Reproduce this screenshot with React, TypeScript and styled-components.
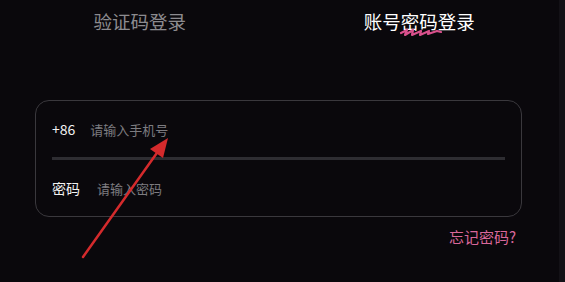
import React from 'react'
import styled, { createGlobalStyle } from 'styled-components'

const GlobalStyle = createGlobalStyle`
  html, body {
    margin: 0;
    padding: 0;
    background: #0a080c;
  }
  body {
    font-family: "Noto Sans CJK SC", "Noto Sans", sans-serif;
  }
`

const Screen = styled.div`
  position: relative;
  display: flex;
  width: 565px;
  height: 282px;
  overflow: hidden;
  background: #0a080c;
`

const Main = styled.div`
  flex: 1;
  display: flex;
  flex-direction: column;
`

const EdgeStrip = styled.div`
  width: 6px;
  background: #131116;
`

const Tabs = styled.div`
  display: flex;
  height: 41px;
  align-items: center;
`

const Tab = styled.div<{ active?: boolean }>`
  flex: 1;
  display: flex;
  justify-content: center;
  font-size: 18.5px;
  line-height: 24px;
  color: ${({ active }) => (active ? '#ffffff' : '#8c8b8f')};
`

const Marked = styled.span`
  position: relative;
  display: inline-block;

  svg {
    position: absolute;
    left: -2px;
    bottom: -5px;
  }
`

const Card = styled.div`
  margin: 59px 37px 0 35px;
  border: 1px solid #3a383d;
  border-radius: 14px;
  padding: 0 16px;
`

const Row = styled.div<{ gap: number }>`
  display: flex;
  align-items: center;
  height: 56px;
  gap: ${({ gap }) => gap}px;
`

const Label = styled.span`
  font-size: 14px;
  color: #f2f2f2;
`

const Placeholder = styled.span`
  font-size: 13px;
  color: #7d7c80;
`

const Divider = styled.div`
  height: 3px;
  background: #2e2d32;
`

const Forgot = styled.div`
  display: flex;
  justify-content: flex-end;
  padding: 9px 43px 0 0;
  font-size: 15px;
  color: #d9679a;
`

const Arrow = styled.svg`
  position: absolute;
  left: 0;
  top: 0;
  pointer-events: none;
`

const Squiggle = () => (
  <svg width="46" height="12" viewBox="0 0 46 12">
    <path
      d="M2 7 L8 4 L6 9 L14 4 L13 9 L22 5 L21 9 L30 5 L29 8 L38 5 L42 6"
      fill="none"
      stroke="#d9508c"
      strokeWidth="2.2"
      strokeLinejoin="round"
      strokeLinecap="round"
    />
  </svg>
)

export default function App() {
  return (
    <>
      <GlobalStyle />
      <Screen>
        <Main>
          <Tabs>
            <Tab>验证码登录</Tab>
            <Tab active>
              账号
              <Marked>
                密码
                <Squiggle />
              </Marked>
              登录
            </Tab>
          </Tabs>
          <Card>
            <Row gap={15}>
              <Label>+86</Label>
              <Placeholder>请输入手机号</Placeholder>
            </Row>
            <Divider />
            <Row gap={17}>
              <Label>密码</Label>
              <Placeholder>请输入密码</Placeholder>
            </Row>
          </Card>
          <Forgot>忘记密码?</Forgot>
        </Main>
        <EdgeStrip />
        <Arrow width="565" height="282" viewBox="0 0 565 282">
          <line x1="83" y1="257" x2="159" y2="150" stroke="#d42a2c" strokeWidth="2.5" strokeLinecap="round" />
          <polygon points="168,138 163,158 150,149" fill="#d42a2c" />
        </Arrow>
      </Screen>
    </>
  )
}
